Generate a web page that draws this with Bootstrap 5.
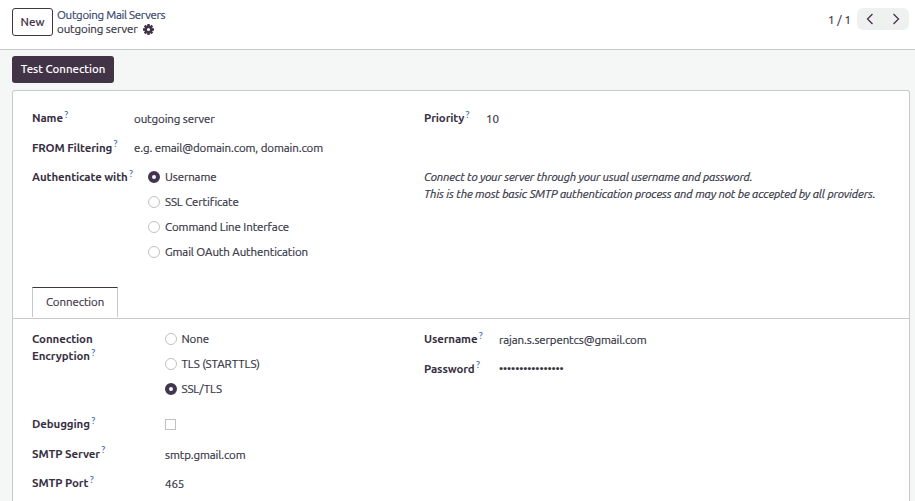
<!DOCTYPE html>
<html lang="en">
<head>
<meta charset="utf-8">
<meta name="viewport" content="width=device-width, initial-scale=1">
<title>Outgoing Mail Servers</title>
<link href="https://cdn.jsdelivr.net/npm/bootstrap@5.3.0/dist/css/bootstrap.min.css" rel="stylesheet">
<style>
body{font-family:Ubuntu,"Noto Sans","Open Sans",sans-serif;font-size:11.5px;line-height:17px;letter-spacing:-.1px;color:#343444;background:#f5f7f6;height:501px;overflow:hidden;--ink:#433347;-webkit-text-stroke:.2px currentColor}
.topbar{height:50px;border-bottom:1px solid #c6c9c9;padding:8px 6px 0 12px}
.btn-new{width:41px;height:28px;padding:0;font-size:11.5px;line-height:24px;font-weight:500;letter-spacing:0;border:1px solid var(--ink);border-radius:3px;color:var(--ink);-webkit-text-stroke:.1px currentColor}
.crumbs{line-height:14px;margin-left:4px}
.crumbs a{color:#35456b;text-decoration:none;letter-spacing:-.3px}
.crumbs svg{margin-left:6px}
.pager span{letter-spacing:.1px;margin-right:6px}
.pager button{width:26px;height:22px;padding:0;border:0;background:#eff1f1;color:var(--ink);display:flex;align-items:center;justify-content:center}
.btn-test,.btn-test:hover{width:102px;height:27px;padding:0 0 2px;font-size:11.5px;line-height:25px;font-weight:500;letter-spacing:-.05px;border-radius:3px;background:var(--ink);color:#fff;margin:6px 0 7px 12px;border:0;-webkit-text-stroke:.05px currentColor}
.sheet{margin:0 5px 0 12px;height:430px;border:1px solid #c8caca;border-bottom:0;border-radius:3px 3px 0 0;background:#fff}
.upper{height:196px;padding-top:18px}
.lower{padding-top:11px}
.half{width:392px;padding-left:19px}
.right{padding-left:19px}
.line{display:flex;height:29.5px}
.lbl{font-weight:700;letter-spacing:-.12px;color:#382f43;width:102px;flex:none;white-space:nowrap;-webkit-text-stroke:0}
.lower .lbl{width:133px}
.upper .right .lbl{width:62px}
.lower .right .lbl{width:75px}
.lbl sup{font-size:9px;font-weight:500;color:#3b6fb0;top:-.47em;margin-left:-1px;line-height:0}
.val{padding-top:1px;white-space:nowrap}
.auth{padding-left:14px}
.opt{height:25px;display:flex;align-items:flex-start;white-space:nowrap}
.opt .form-check-input{width:12px;height:12px;margin:3px 5px 0 0;border:1px solid #bfc1c4;flex:none;background-image:none}
.opt .form-check-input:checked{border:4px solid #41354f;background:#fff}
.enc .opt .form-check-input{margin-right:5px;margin-left:-.5px}
.line .form-check-input[type=checkbox]{width:11px;height:11px;margin:4px 0 0;border:1px solid #bfc1c4;border-radius:0}
.tabline{height:32px;border-bottom:1px solid #c8caca;padding-left:19px}
.tab-on{width:86px;height:30px;border:1px solid #c8caca;border-top-color:var(--ink);border-bottom:0;text-align:center;line-height:27px;color:var(--ink)}
.prio{height:59px}
.hint{letter-spacing:-.14px}
.enc{height:85px}
.dots{letter-spacing:-.1px}
</style>
<script src="https://cdn.jsdelivr.net/npm/bootstrap@5.3.0/dist/js/bootstrap.bundle.min.js"></script>
</head>
<body>
<header class="topbar bg-white d-flex align-items-start">
  <button class="btn btn-new">New</button>
  <div class="crumbs">
    <a href="#" class="d-block">Outgoing Mail Servers</a>
    <div class="d-flex align-items-center"><span>outgoing server</span>
      <svg width="11" height="11" viewBox="-8 -8 16 16" fill="none" stroke="#433347"><circle r="4.2" stroke-width="4"/><path d="M0-8v3.4M0 8V4.6M-8 0h3.4M8 0H4.6M-5.6-5.6l2.3 2.3M5.6 5.6 3.3 3.3M-5.6 5.6l2.3-2.3M5.6-5.6 3.3-3.3" stroke-width="3.4"/></svg>
    </div>
  </div>
  <div class="pager ms-auto d-flex align-items-center">
    <span>1 / 1</span>
    <button class="rounded-start" aria-label="Previous"><svg width="8" height="12" viewBox="0 0 8 12" fill="none" stroke="currentColor" stroke-width="1.3"><path d="M6.5 1 1.5 6l5 5"/></svg></button>
    <button class="rounded-end" aria-label="Next"><svg width="8" height="12" viewBox="0 0 8 12" fill="none" stroke="currentColor" stroke-width="1.3"><path d="m1.5 1 5 5-5 5"/></svg></button>
  </div>
</header>
<button class="btn btn-test d-block">Test Connection</button>
<main class="sheet">
  <section class="d-flex upper">
    <div class="half">
      <div class="line"><div class="lbl">Name <sup>?</sup></div><div class="val">outgoing server</div></div>
      <div class="line"><div class="lbl">FROM Filtering <sup>?</sup></div><div class="val pt-0">e.g. email@domain.com, domain.com</div></div>
      <div class="d-flex"><div class="lbl">Authenticate with <sup>?</sup></div>
        <div class="auth">
          <label class="opt"><input class="form-check-input" type="radio" name="auth" checked>Username</label>
          <label class="opt"><input class="form-check-input" type="radio" name="auth">SSL Certificate</label>
          <label class="opt"><input class="form-check-input" type="radio" name="auth">Command Line Interface</label>
          <label class="opt"><input class="form-check-input" type="radio" name="auth">Gmail OAuth Authentication</label>
        </div></div>
    </div>
    <div class="right">
      <div class="line prio"><div class="lbl">Priority <sup>?</sup></div><div class="val">10</div></div>
      <div class="fst-italic text-nowrap hint">Connect to your server through your usual username and password.<br>This is the most basic SMTP authentication process and may not be accepted by all providers.</div>
    </div>
  </section>
  <div class="tabline"><div class="tab-on">Connection</div></div>
  <section class="d-flex lower">
    <div class="half">
      <div class="d-flex enc"><div class="lbl">Connection<br>Encryption <sup>?</sup></div>
        <div>
          <label class="opt"><input class="form-check-input" type="radio" name="enc">None</label>
          <label class="opt"><input class="form-check-input" type="radio" name="enc">TLS (STARTTLS)</label>
          <label class="opt"><input class="form-check-input" type="radio" name="enc" checked>SSL/TLS</label>
        </div></div>
      <div class="line"><div class="lbl">Debugging <sup>?</sup></div><input class="form-check-input" type="checkbox" aria-label="Debugging"></div>
      <div class="line"><div class="lbl">SMTP Server <sup>?</sup></div><div class="val">smtp.gmail.com</div></div>
      <div class="line"><div class="lbl">SMTP Port <sup>?</sup></div><div class="val">465</div></div>
    </div>
    <div class="right">
      <div class="line"><div class="lbl">Username <sup>?</sup></div><div class="val">rajan.s.serpentcs@gmail.com</div></div>
      <div class="line"><div class="lbl">Password <sup>?</sup></div><div class="val pt-0 dots">••••••••••••••••</div></div>
    </div>
  </section>
</main>
</body>
</html>
